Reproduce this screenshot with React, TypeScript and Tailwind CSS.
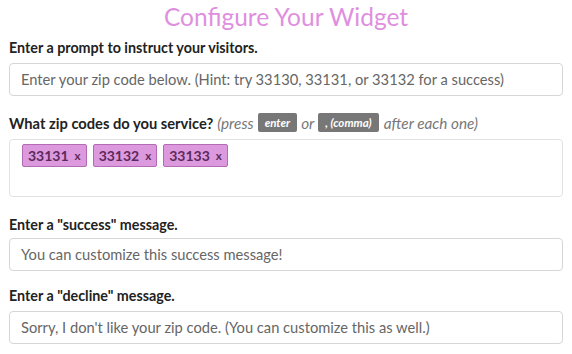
import React from "react";

const font = { fontFamily: "Lato, 'Open Sans', sans-serif" };

function Label({ children }: { children: React.ReactNode }) {
  return <div className="text-[14.3px] font-bold text-[#222] leading-[18px] whitespace-nowrap">{children}</div>;
}

function Input({ value }: { value: string }) {
  return (
    <div className="h-[33px] rounded-[4px] border border-[#d6d6d6] bg-white px-[11px] flex items-center text-[14.7px] text-[#666] whitespace-nowrap">
      {value}
    </div>
  );
}

function Tag({ code }: { code: string }) {
  return (
    <span className="inline-flex items-center h-[23px] pl-[5px] pr-[5px] rounded-[2px] border border-[#b36bb3] bg-[#dd99dd] text-[#5b2a5b] font-bold">
      <span className="text-[14px]">{code}</span>
      <span className="ml-[6px] text-[11.5px]">x</span>
    </span>
  );
}

export default function App() {
  return (
    <div className="w-[572px] h-[354px] bg-white overflow-hidden px-[9px]" style={font}>
      <h1 className="text-center text-[24.5px] leading-[28px] pt-[3px] text-[#e08fe0] font-normal">
        Configure Your Widget
      </h1>
      <div className="mt-[8px]">
        <Label>Enter a prompt to instruct your visitors.</Label>
      </div>
      <div className="mt-[6px]">
        <Input value="Enter your zip code below. (Hint: try 33130, 33131, or 33132 for a success)" />
      </div>
      <div className="mt-[17px]">
        <Label>
          <div className="flex items-center">
            <span className="text-[14.7px]">What zip codes do you service?</span>
            <span className="ml-[4px] italic font-normal text-[#777] text-[15.3px]">(press</span>
            <span className="ml-[4px] inline-flex items-center h-[19px] px-[7px] rounded-[2px] bg-[#777] text-white text-[11.5px] italic font-bold">enter</span>
            <span className="ml-[4px] italic font-normal text-[#777] text-[15.3px]">or</span>
            <span className="ml-[4px] inline-flex items-center h-[19px] px-[7px] rounded-[2px] bg-[#777] text-white text-[11.5px] italic font-bold">, (comma)</span>
            <span className="ml-[5px] italic font-normal text-[#777] text-[15.3px]">after each one)</span>
          </div>
        </Label>
      </div>
      <div className="mt-[7px] h-[58px] rounded-[4px] border border-[#e2e2e2] bg-white pl-[12px] pt-[4px] flex items-start gap-[6px]">
        <Tag code="33131" />
        <Tag code="33132" />
        <Tag code="33133" />
      </div>
      <div className="mt-[19px]">
        <Label>Enter a "success" message.</Label>
      </div>
      <div className="mt-[4px]">
        <Input value="You can customize this success message!" />
      </div>
      <div className="mt-[16px]">
        <Label>Enter a "decline" message.</Label>
      </div>
      <div className="mt-[6px]">
        <Input value="Sorry, I don't like your zip code. (You can customize this as well.)" />
      </div>
    </div>
  );
}
